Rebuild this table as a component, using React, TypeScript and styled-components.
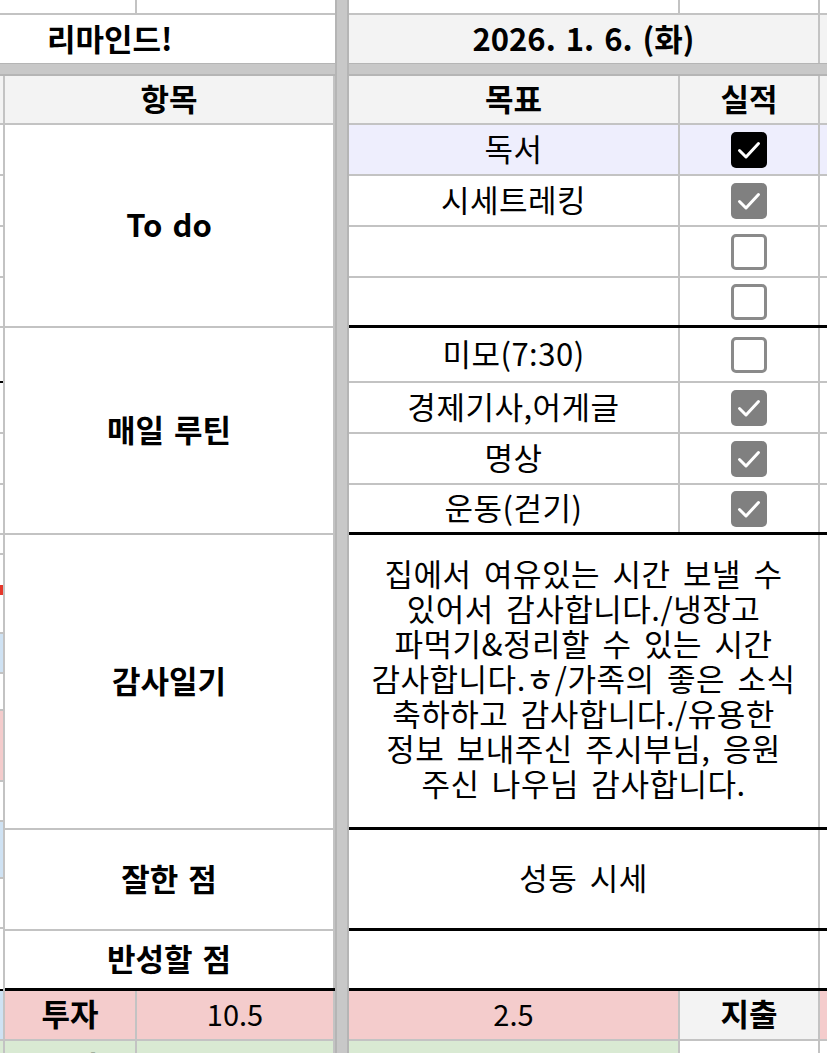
import React from 'react';
import styled, { createGlobalStyle } from 'styled-components';

const GRID = '#c3c3c3';
const HEAD = '#f3f3f3';
const PINK = '#f4cccc';
const GREEN = '#d9ead3';
const LAVENDER = '#eeeefd';
const BLUE = '#cfe2f3';

const Global = createGlobalStyle`
  html, body {
    margin: 0;
    padding: 0;
    background: #fff;
    overflow: hidden;
  }
  body {
    font-family: "Noto Sans CJK KR", "Noto Sans", sans-serif;
    color: #000;
  }
`;

const Sheet = styled.div`
  width: 827px;
  height: 1053px;
  overflow: hidden;
  display: grid;
  grid-template-columns: 335px 14px 478px;
  grid-template-rows: 63px 13px 977px;
`;

const FreezeV = styled.div`
  grid-column: 2;
  grid-row: 1 / span 3;
  background: #c8c8c8;
  border-left: 2px solid #b5b5b5;
  border-right: 2px solid #b5b5b5;
  box-sizing: border-box;
  z-index: 2;
`;

const FreezeH = styled.div`
  grid-column: 1 / span 3;
  grid-row: 2;
  background: #c8c8c8;
  border-top: 1px solid #b5b5b5;
  border-bottom: 2px solid #b5b5b5;
  box-sizing: border-box;
`;

const Pane: any = styled.div`
  grid-column: ${(p: any) => p.$col};
  grid-row: ${(p: any) => p.$row};
  display: flex;
  flex-direction: ${(p: any) => p.$dir || 'column'};
  overflow: hidden;
`;

const Row: any = styled.div`
  display: grid;
  grid-template-columns: ${(p: any) => p.$cols};
  height: ${(p: any) => p.$h}px;
  flex: none;
  box-sizing: border-box;
  border-bottom: ${(p: any) => (p.$open ? 'none' : p.$thick ? '3px solid #000' : `2px solid ${GRID}`)};
  background: ${(p: any) => p.$bg || '#fff'};
`;

const Cell: any = styled.div`
  display: flex;
  align-items: ${(p: any) => p.$valign || 'center'};
  justify-content: ${(p: any) => p.$align || 'center'};
  padding-left: ${(p: any) => p.$pl || 0}px;
  padding-bottom: ${(p: any) => (p.$pb ?? 5)}px;
  grid-column: ${(p: any) => (p.$span ? `span ${p.$span}` : 'auto')};
  background: ${(p: any) => p.$bg || 'transparent'};
  border-right: ${(p: any) => (p.$noRight ? 'none' : `2px solid ${GRID}`)};
  box-sizing: border-box;
  font-size: 31px;
  letter-spacing: 0.5px;
  word-spacing: 5px;
  font-weight: 400;
  white-space: nowrap;
  overflow: hidden;
  min-width: 0;
`;

const Label = styled(Cell)`
  font-weight: 700;
  letter-spacing: 0;
  word-spacing: 3px;
`;

const Num = styled(Cell)`
  font-size: 29px;
  letter-spacing: 0;
`;

const Diary = styled.div`
  grid-column: span 2;
  display: flex;
  align-items: center;
  justify-content: center;
  text-align: center;
  white-space: pre-line;
  font-size: 31px;
  letter-spacing: 0.5px;
  word-spacing: 5px;
  line-height: 35px;
  border-right: 2px solid ${GRID};
  box-sizing: border-box;
  padding-bottom: 8px;
`;

const Strip = styled.div`
  width: 5px;
  flex: none;
  display: flex;
  flex-direction: column;
  border-right: 2px solid ${GRID};
  box-sizing: border-box;
`;

const StripSeg: any = styled.div`
  height: ${(p: any) => p.$h}px;
  flex: none;
  box-sizing: border-box;
  background: ${(p: any) => p.$bg || '#fff'};
  border-bottom: ${(p: any) => (p.$line ? `2px solid ${p.$line}` : 'none')};
`;

const LeftBody = styled.div`
  flex: 1;
  display: flex;
  flex-direction: column;
`;

const Box: any = styled.span`
  width: 36px;
  height: 36px;
  border-radius: 5px;
  box-sizing: border-box;
  display: flex;
  align-items: center;
  justify-content: center;
  background: ${(p: any) => (p.$state === 'on' ? '#000' : p.$state === 'dim' ? '#808080' : '#fff')};
  border: ${(p: any) => (p.$state === 'off' ? '3px solid #8a8a8a' : 'none')};
`;

const Check = ({ state }: { state: 'on' | 'dim' | 'off' }) => (
  <Box $state={state}>
    {state !== 'off' && (
      <svg width="36" height="36" viewBox="0 0 36 36" fill="none">
        <path d="M8.5 18.5 L15 25 L27.5 11.5" stroke="#fff" strokeWidth="3" strokeLinecap="round" strokeLinejoin="round" />
      </svg>
    )}
  </Box>
);

const RCOLS = '331px 140px 7px';
const LCOLS = '132px 198px';

type Goal = { text: string; state: 'on' | 'dim' | 'off'; h: number; thick?: boolean; bg?: string };

const todo: Goal[] = [
  { text: '독서', state: 'on', h: 51, bg: LAVENDER },
  { text: '시세트레킹', state: 'dim', h: 51 },
  { text: '', state: 'off', h: 51 },
  { text: '', state: 'off', h: 50, thick: true },
];

const routine: Goal[] = [
  { text: '미모(7:30)', state: 'off', h: 55 },
  { text: '경제기사,어게글', state: 'dim', h: 51 },
  { text: '명상', state: 'dim', h: 51 },
  { text: '운동(걷기)', state: 'dim', h: 50, thick: true },
];

// 왼쪽 끝에 살짝 보이는 이전 열
const strip: { h: number; bg?: string; line?: string }[] = [
  { h: 49, bg: HEAD, line: GRID },
  { h: 51, line: GRID },
  { h: 51, line: GRID },
  { h: 51, line: GRID },
  { h: 50, line: GRID },
  { h: 55, line: '#000' },
  { h: 51, line: GRID },
  { h: 51, line: GRID },
  { h: 50, line: GRID },
  { h: 20, line: GRID },
  { h: 30 },
  { h: 10, bg: '#e5382b' },
  { h: 39, line: GRID },
  { h: 40, bg: BLUE, line: GRID },
  { h: 37, line: GRID },
  { h: 71, bg: PINK, line: GRID },
  { h: 40, line: GRID },
  { h: 57, bg: BLUE, line: GRID },
  { h: 50, line: GRID },
  { h: 62, line: '#000' },
  { h: 50, bg: BLUE, line: GRID },
  { h: 20, bg: GREEN },
];

const diary =
  '집에서 여유있는 시간 보낼 수\n있어서 감사합니다./냉장고\n파먹기&정리할 수 있는 시간\n감사합니다.ㅎ/가족의 좋은 소식\n축하하고 감사합니다./유용한\n정보 보내주신 주시부님, 응원\n주신 나우님 감사합니다.';

export default function App() {
  return (
    <>
      <Global />
      <Sheet>
        <Pane $col={1} $row={1}>
          <Row $cols="137px 198px" $h={15}>
            <Cell />
            <Cell $noRight />
          </Row>
          <Row $cols="1fr" $h={48} $open>
            <Label $align="flex-start" $pl={47} $pb={3} $noRight>리마인드!</Label>
          </Row>
        </Pane>

        <Pane $col={3} $row={1}>
          <Row $cols={RCOLS} $h={15}>
            <Cell />
            <Cell />
            <Cell $noRight />
          </Row>
          <Row $cols={RCOLS} $h={48} $bg={HEAD} $open>
            <Label $span={2} $pb={3}>2026. 1. 6. (화)</Label>
            <Cell $noRight />
          </Row>
        </Pane>

        <FreezeH />
        <FreezeV />

        <Pane $col={1} $row={3} $dir="row">
          <Strip>
            {strip.map((s, i) => (
              <StripSeg key={i} $h={s.h} $bg={s.bg} $line={s.line} />
            ))}
          </Strip>
          <LeftBody>
            <Row $cols={LCOLS} $h={49} $bg={HEAD}>
              <Label $span={2}>항목</Label>
            </Row>
            <Row $cols={LCOLS} $h={203}>
              <Label $span={2}>To do</Label>
            </Row>
            <Row $cols={LCOLS} $h={207}>
              <Label $span={2}>매일 루틴</Label>
            </Row>
            <Row $cols={LCOLS} $h={295}>
              <Label $span={2}>감사일기</Label>
            </Row>
            <Row $cols={LCOLS} $h={101}>
              <Label $span={2}>잘한 점</Label>
            </Row>
            <Row $cols={LCOLS} $h={60} $thick>
              <Label $span={2}>반성할 점</Label>
            </Row>
            <Row $cols={LCOLS} $h={50} $bg={PINK}>
              <Label>투자</Label>
              <Num>10.5</Num>
            </Row>
            <Row $cols={LCOLS} $h={40} $bg={GREEN}>
              <Label $valign="flex-start" $pb={0} style={{ paddingTop: 2 }}>수입</Label>
              <Cell />
            </Row>
          </LeftBody>
        </Pane>

        <Pane $col={3} $row={3}>
          <Row $cols={RCOLS} $h={49} $bg={HEAD}>
            <Label>목표</Label>
            <Label>실적</Label>
            <Cell $noRight />
          </Row>
          {[...todo, ...routine].map((g, i) => (
            <Row key={i} $cols={RCOLS} $h={g.h} $thick={g.thick} $bg={g.bg}>
              <Cell>{g.text}</Cell>
              <Cell $pb={0}>
                <Check state={g.state} />
              </Cell>
              <Cell $noRight />
            </Row>
          ))}
          <Row $cols={RCOLS} $h={295} $thick>
            <Diary>{diary}</Diary>
            <Cell $noRight />
          </Row>
          <Row $cols={RCOLS} $h={101} $thick>
            <Cell $span={2}>성동 시세</Cell>
            <Cell $noRight />
          </Row>
          <Row $cols={RCOLS} $h={60} $thick>
            <Cell $span={2} />
            <Cell $noRight />
          </Row>
          <Row $cols={RCOLS} $h={50}>
            <Num $bg={PINK}>2.5</Num>
            <Label $bg={HEAD}>지출</Label>
            <Cell $bg={PINK} $noRight />
          </Row>
          <Row $cols={RCOLS} $h={40}>
            <Cell $bg={GREEN} />
            <Cell />
            <Cell $noRight />
          </Row>
        </Pane>
      </Sheet>
    </>
  );
}
